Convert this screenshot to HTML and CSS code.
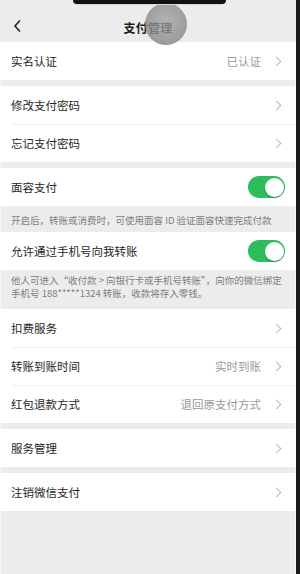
FILE: index.html
```html
<!DOCTYPE html>
<html lang="zh-CN">
<head>
<meta charset="utf-8">
<link rel="stylesheet" href="styles.css">
</head>
<body>
<div class="phone">
  <div class="notch"></div>
  <div class="touch"></div>
  <header class="nav">
    <svg class="back" width="9" height="14" viewBox="0 0 9 14"><path d="M7 1.5 L2 7 L7 12.5" fill="none" stroke="#222" stroke-width="1.6"/></svg>
    <div class="title">支付管理</div>
  </header>

  <section class="group">
    <div class="row"><span class="label">实名认证</span><span class="value">已认证</span><span class="chev"></span></div>
  </section>

  <section class="group">
    <div class="row"><span class="label">修改支付密码</span><span class="chev"></span></div>
    <div class="row"><span class="label">忘记支付密码</span><span class="chev"></span></div>
  </section>

  <section class="group">
    <div class="row"><span class="label">面容支付</span><span class="toggle"></span></div>
  </section>
  <p class="note one">开启后，转账或消费时，可使用面容 ID 验证面容快速完成付款</p>

  <section class="group nogap">
    <div class="row"><span class="label">允许通过手机号向我转账</span><span class="toggle"></span></div>
  </section>
  <p class="note two">他人可进入“收付款 &gt; 向银行卡或手机号转账”，向你的微信绑定手机号 188*****1324 转账，收款将存入零钱。</p>

  <section class="group nogap">
    <div class="row"><span class="label">扣费服务</span><span class="chev"></span></div>
    <div class="row"><span class="label">转账到账时间</span><span class="value">实时到账</span><span class="chev"></span></div>
    <div class="row"><span class="label">红包退款方式</span><span class="value">退回原支付方式</span><span class="chev"></span></div>
  </section>

  <section class="group">
    <div class="row"><span class="label">服务管理</span><span class="chev"></span></div>
  </section>

  <section class="group">
    <div class="row"><span class="label">注销微信支付</span><span class="chev"></span></div>
  </section>
</div>
</body>
</html>
```

FILE: styles.css
```css
html, body {
  margin: 0;
  padding: 0;
  background: #ececec;
}
body {
  width: 300px;
  height: 574px;
  overflow: hidden;
  font-family: "Noto Sans CJK SC", "Noto Sans", sans-serif;
  color: #2b2b2b;
}
.phone {
  position: relative;
  width: 296px;
  height: 574px;
  background: #ececec;
  border-right: 4px solid #1c1c1c;
  box-shadow: inset -1px 0 0 #f7f7f7, inset 1px 0 0 #f4f4f4;
}
.notch {
  position: absolute;
  left: 73px;
  top: 0;
  width: 153px;
  height: 4px;
  background: #111;
  border-radius: 0 0 5px 5px;
  box-shadow: 0 1px 0 #d8d8d8;
  z-index: 3;
}
.touch {
  position: absolute;
  left: 145px;
  top: 3px;
  width: 42px;
  height: 42px;
  border-radius: 50%;
  background: radial-gradient(circle at 50% 45%, rgba(160,160,160,0.75) 0%, rgba(140,140,140,0.8) 60%, rgba(115,115,115,0.85) 100%);
  z-index: 2;
}
.nav {
  height: 42px;
  display: flex;
  align-items: center;
  justify-content: center;
  position: relative;
  background: #ececec;
}
.back {
  position: absolute;
  left: 13px;
  top: 19px;
}
.title {
  font-size: 12px;
  font-weight: 700;
  color: #1e1e1e;
  margin-top: 12px;
  letter-spacing: 0.2px;
}
.group {
  background: #fff;
  margin-top: 6px;
}
.nav + .group {
  margin-top: 0;
}
.group.nogap {
  margin-top: 0;
}
.row {
  height: 38px;
  display: flex;
  align-items: center;
  padding: 0 10px 0 11px;
  position: relative;
}
.row + .row::before {
  content: "";
  position: absolute;
  left: 11px;
  right: 0;
  top: 0;
  height: 1px;
  background: #f0f0f0;
}
.label {
  flex: 1;
  font-size: 11.5px;
  color: #262626;
}
.value {
  font-size: 11.5px;
  color: #9a9a9a;
  margin-right: 12px;
}
.chev {
  width: 6px;
  height: 6px;
  border-top: 1.2px solid #b8b8b8;
  border-right: 1.2px solid #b8b8b8;
  transform: rotate(45deg);
  margin-right: 6px;
}
.toggle {
  width: 37px;
  height: 22px;
  border-radius: 11px;
  background: #2dbd5f;
  position: relative;
  margin-right: 1px;
}
.toggle::after {
  content: "";
  position: absolute;
  right: 1.5px;
  top: 1.5px;
  width: 19px;
  height: 19px;
  border-radius: 50%;
  background: #fff;
  box-shadow: 0 1px 2px rgba(0,0,0,0.2);
}
.note {
  margin: 0;
  padding: 0 12px 0 11px;
  font-size: 9.5px;
  line-height: 13px;
  color: #7e7e7e;
}
.note.one {
  padding-top: 2px;
  height: 24px;
  display: flex;
  align-items: center;
}
.note.two {
  padding-top: 4px;
  box-sizing: border-box;
  height: 39px;
}
```
